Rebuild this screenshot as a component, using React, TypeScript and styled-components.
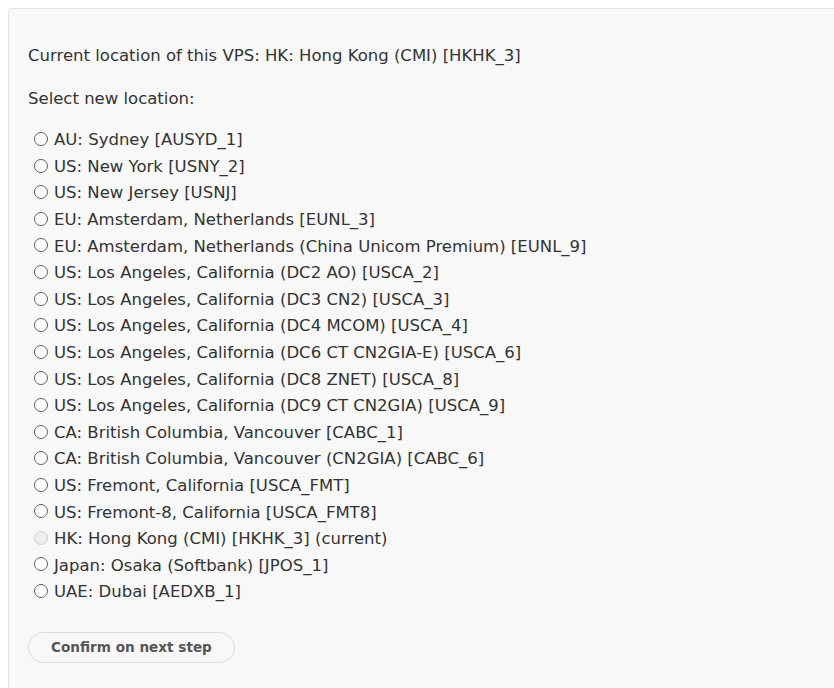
import React from "react";
import styled, { createGlobalStyle } from "styled-components";

const Global = createGlobalStyle`
  html, body { margin: 0; padding: 0; overflow: hidden; background: #ffffff; }
  body { padding: 8px 0 0 8px; }
`;

const Panel = styled.div`
  box-sizing: border-box;
  width: calc(100% + 20px);
  min-height: 720px;
  background: #f8f8f8;
  border: 1px solid #e2e2e2;
  border-radius: 4px;
  padding: 34px 19px 0 19px;
  font-family: "DejaVu Sans", Verdana, sans-serif;
  font-size: 16.5px;
  color: #333;
  line-height: 26.6px;
`;

const Para = styled.p<{ $after: number }>`
  margin: 0 0 ${(p) => p.$after}px 0;
`;

const List = styled.div`
  display: flex;
  flex-direction: column;
  margin-bottom: 26px;
`;

const Option = styled.label<{ $disabled?: boolean }>`
  display: flex;
  align-items: center;
  height: 26.6px;
  padding-left: 6px;
  color: #333;
  cursor: ${(p) => (p.$disabled ? "default" : "pointer")};
`;

const Radio = styled.input.attrs({ type: "radio" })`
  appearance: none;
  -webkit-appearance: none;
  box-sizing: border-box;
  width: 14px;
  height: 14px;
  margin: -3px 6px 0 0;
  border-radius: 50%;
  border: 1.5px solid #5f5f5f;
  background: #fff;
  flex: none;
  &:disabled {
    border-color: #cfcfcf;
    background: #efefef;
  }
`;

const Button = styled.button`
  box-sizing: border-box;
  height: 31px;
  padding: 0 22px;
  border: 1px solid #dcdcdc;
  border-radius: 16px;
  background: #f8f8f8;
  color: #555;
  font-family: "DejaVu Sans", Verdana, sans-serif;
  font-weight: bold;
  font-size: 13.6px;
  cursor: pointer;
`;

const options: { label: string; disabled?: boolean }[] = [
  { label: "AU: Sydney [AUSYD_1]" },
  { label: "US: New York [USNY_2]" },
  { label: "US: New Jersey [USNJ]" },
  { label: "EU: Amsterdam, Netherlands [EUNL_3]" },
  { label: "EU: Amsterdam, Netherlands (China Unicom Premium) [EUNL_9]" },
  { label: "US: Los Angeles, California (DC2 AO) [USCA_2]" },
  { label: "US: Los Angeles, California (DC3 CN2) [USCA_3]" },
  { label: "US: Los Angeles, California (DC4 MCOM) [USCA_4]" },
  { label: "US: Los Angeles, California (DC6 CT CN2GIA-E) [USCA_6]" },
  { label: "US: Los Angeles, California (DC8 ZNET) [USCA_8]" },
  { label: "US: Los Angeles, California (DC9 CT CN2GIA) [USCA_9]" },
  { label: "CA: British Columbia, Vancouver [CABC_1]" },
  { label: "CA: British Columbia, Vancouver (CN2GIA) [CABC_6]" },
  { label: "US: Fremont, California [USCA_FMT]" },
  { label: "US: Fremont-8, California [USCA_FMT8]" },
  { label: "HK: Hong Kong (CMI) [HKHK_3] (current)", disabled: true },
  { label: "Japan: Osaka (Softbank) [JPOS_1]" },
  { label: "UAE: Dubai [AEDXB_1]" },
];

export default function App() {
  return (
    <>
      <Global />
      <Panel>
        <Para $after={16}>Current location of this VPS: HK: Hong Kong (CMI) [HKHK_3]</Para>
        <Para $after={15}>Select new location:</Para>
        <List>
          {options.map((o) => (
            <Option key={o.label} $disabled={o.disabled}>
              <Radio name="loc" disabled={o.disabled} />
              {o.label}
            </Option>
          ))}
        </List>
        <Button>Confirm on next step</Button>
      </Panel>
    </>
  );
}
